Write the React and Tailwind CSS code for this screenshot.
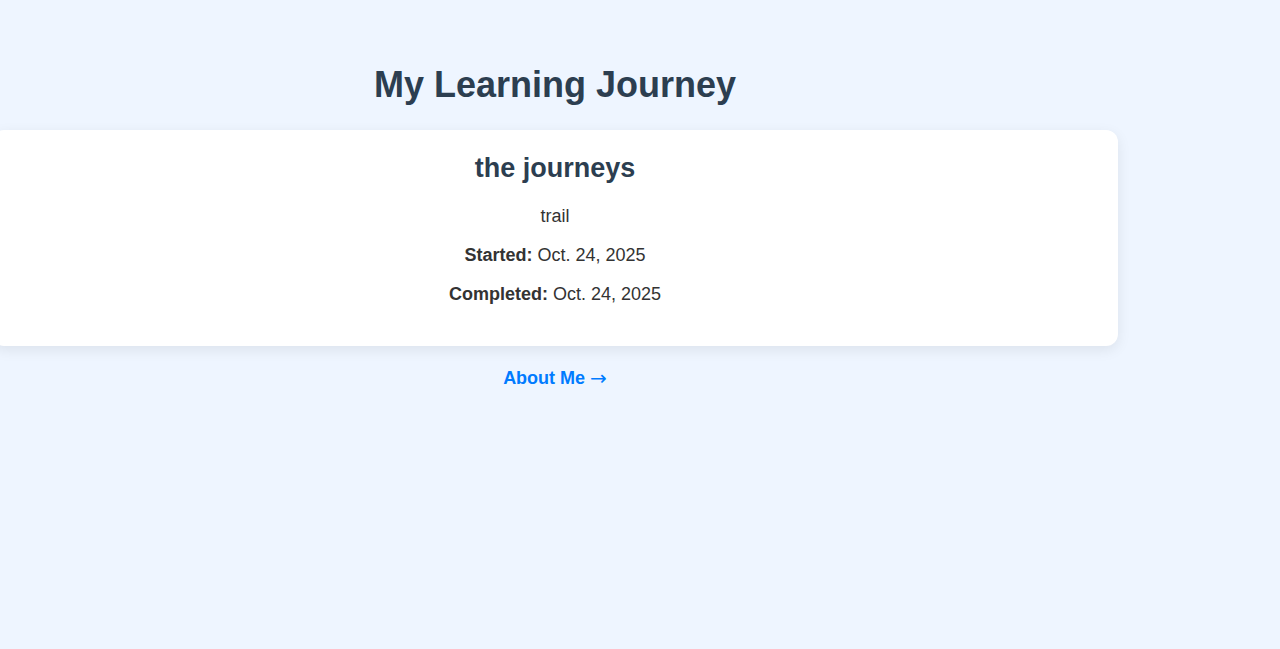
import React from "react";

const journey = {
  title: "the journeys",
  description: "trail",
  started: "Oct. 24, 2025",
  completed: "Oct. 24, 2025",
};

export default function App() {
  return (
    <div className="min-h-[649px] bg-[#eef5ff] font-['Liberation_Sans',Arial,sans-serif] overflow-hidden">
      <div className="w-[1126px] -ml-2 flex flex-col items-center pt-[64px]">
        <h1 className="text-[36px] leading-[41px] font-bold text-[#2c3e50]">My Learning Journey</h1>

        <div className="mt-[25px] w-full bg-white rounded-[12px] shadow-[0_4px_14px_rgba(0,0,0,0.08)] pt-[23px] pb-[38px] flex flex-col items-center text-center">
          <h2 className="text-[27px] leading-[31px] font-bold text-[#2c3e50]">{journey.title}</h2>
          <p className="mt-[18px] text-[18px] leading-[28px] text-[#333]">{journey.description}</p>
          <p className="mt-[11px] text-[18px] leading-[28px] text-[#333]">
            <strong>Started:</strong> {journey.started}
          </p>
          <p className="mt-[11px] text-[18px] leading-[28px] text-[#333]">
            <strong>Completed:</strong> {journey.completed}
          </p>
        </div>

        <a href="#" className="mt-[22px] flex items-center text-[18px] leading-[21px] font-bold text-[#007bff]">
          About Me
          <span className="ml-[5px] font-['DejaVu_Sans',sans-serif] font-normal text-[20px] leading-[21px]">→</span>
        </a>
      </div>
    </div>
  );
}
